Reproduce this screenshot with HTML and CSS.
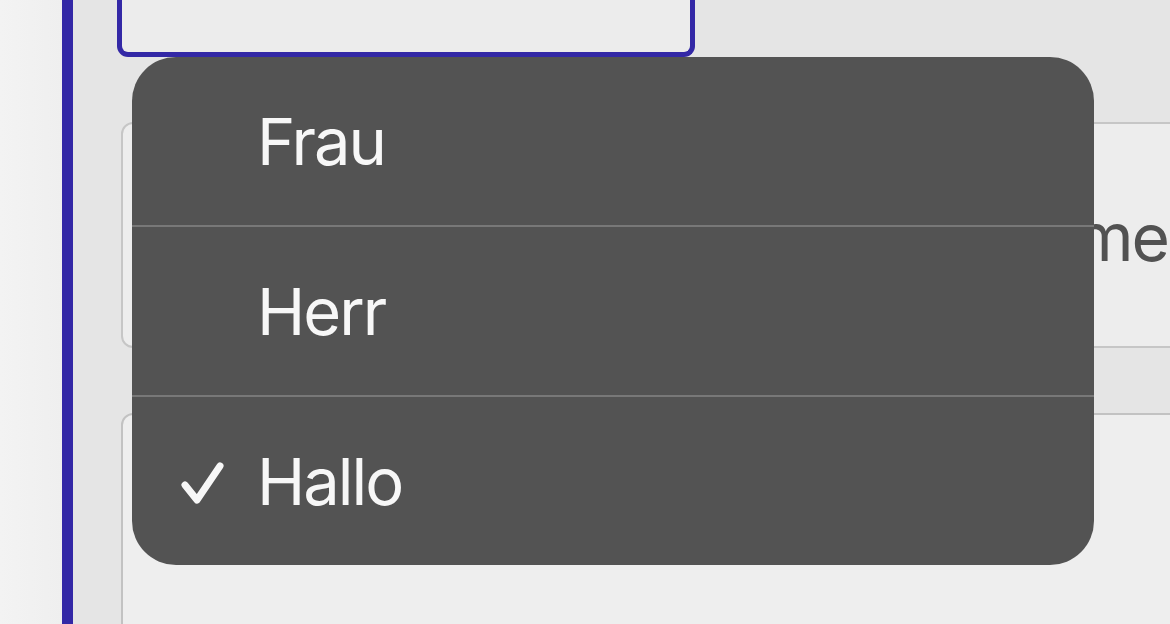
FILE: index.html
```html
<!DOCTYPE html>
<html lang="de">
<head>
<meta charset="UTF-8">
<meta name="viewport" content="width=device-width, initial-scale=1.0">
<title>Anrede</title>
<link rel="stylesheet" href="styles.css">
</head>
<body>
  <div class="page">
    <div class="gutter"></div>
    <div class="rail"></div>
    <div class="panel">
      <div class="field active"></div>
      <div class="field name"><span class="placeholder">Name</span></div>
      <div class="field next"></div>

      <!-- Auswahlmenü der Anrede -->
      <ul class="menu">
        <li class="option"><span class="check"></span>Frau</li>
        <li class="option"><span class="check"></span>Herr</li>
        <li class="option selected">
          <span class="check">
            <svg width="45" height="44" viewBox="0 0 45 44"><path d="M5 24 L17 39 L40 5" fill="none" stroke="#f7f7f7" stroke-width="7" stroke-linecap="round" stroke-linejoin="round"/></svg>
          </span>Hallo
        </li>
      </ul>
    </div>
  </div>
</body>
</html>
```

FILE: styles.css
```css
body {
  margin: 0;
  font-family: 'Inter', 'Liberation Sans', sans-serif;
  background-color: #f2f2f2;
  overflow: hidden;
}
.page {
  display: flex;
  height: 624px;
}
.gutter {
  width: 62px;
  background: linear-gradient(to right, #f3f3f3, #efefef);
}
.rail {
  width: 11px;
  background-color: #3328a6;
}
.panel {
  position: relative;
  flex: 1;
  display: flex;
  flex-direction: column;
  gap: 65px;
  padding-left: 44px;
  background-color: #e5e5e5;
  overflow: hidden;
}
.field {
  box-sizing: border-box;
  background-color: #ededed;
  border: 2px solid #c6c6c6;
  border-radius: 12px;
}
.field.active {
  width: 578px;
  height: 57px;
  border: 5px solid #3328a6;
  border-top: none;
  border-radius: 0 0 11px 11px;
  background-color: #ececec;
}
.field.name {
  height: 226px;
  margin-left: 4px;
  margin-right: -20px;
  display: flex;
  align-items: center;
  justify-content: flex-end;
  padding-right: 20px;
}
.placeholder {
  font-size: 66px;
  letter-spacing: -2px;
  color: #525252;
  white-space: nowrap;
  margin-top: 4px;
}
.field.next {
  flex: 1;
  margin-left: 4px;
  margin-right: -20px;
  margin-bottom: -20px;
  border-color: #c2c2c2;
  background-color: #eeeeee;
}
.menu {
  position: absolute;
  top: 57px;
  left: 59px;
  width: 962px;
  margin: 0;
  padding: 0;
  list-style: none;
  background-color: #535353;
  border-radius: 44px;
  overflow: hidden;
}
.option {
  display: flex;
  align-items: center;
  height: 168px;
  font-size: 65px;
  color: #f7f7f7;
  letter-spacing: -2px;
}
.option + .option {
  border-top: 2px solid #787878;
}
.check {
  display: flex;
  width: 77px;
  margin-left: 48px;
  padding-top: 4px;
}
```
